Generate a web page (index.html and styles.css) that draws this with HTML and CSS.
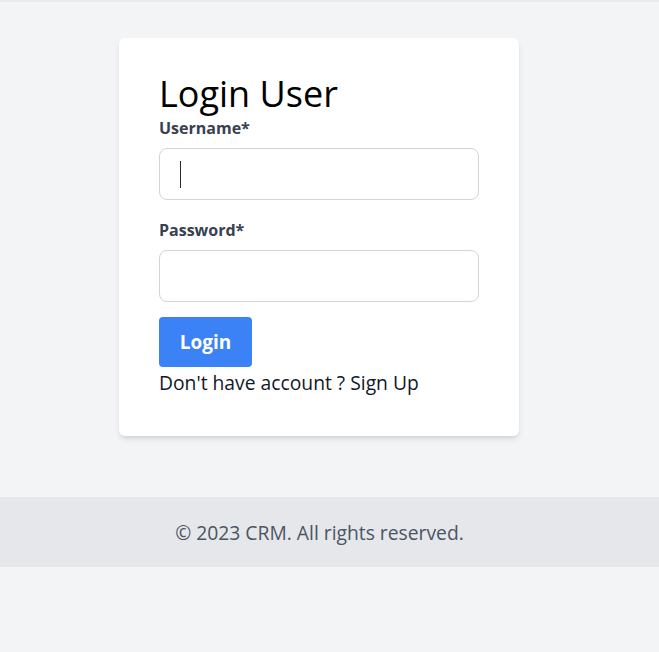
FILE: index.html
```html
<!DOCTYPE html>
<html lang="en">
<head>
<meta charset="utf-8">
<title>Login User</title>
<link rel="stylesheet" href="styles.css">
</head>
<body>
<div class="topbar"></div>
<main class="main">
  <div class="card">
    <h1 class="title">Login User</h1>
    <form class="form">
      <label class="label" for="username">Username*</label>
      <div class="field">
        <input class="input" id="username" type="text">
        <span class="caret"></span>
      </div>
      <label class="label" for="password">Password*</label>
      <div class="field field-last">
        <input class="input" id="password" type="password">
      </div>
      <button class="btn" type="button">Login</button>
      <p class="signup">Don't have account ? <a class="link" href="#">Sign Up</a></p>
    </form>
  </div>
</main>
<footer class="footer">© 2023 CRM. All rights reserved.</footer>
</body>
</html>
```

FILE: styles.css
```css
* { box-sizing: border-box; }
html, body { margin: 0; padding: 0; }
body {
  background: #f3f4f6;
  font-family: "Open Sans", "Noto Sans", sans-serif;
  color: #1f2937;
  min-height: 652px;
}
.topbar { height: 2px; background: #e9eaec; }
.main { padding: 36px 0 61px 119px; }
.card {
  width: 400px;
  background: #fff;
  border-radius: 6px;
  box-shadow: 0 4px 6px -1px rgba(0,0,0,0.1), 0 2px 4px -2px rgba(0,0,0,0.1);
  padding: 33px 40px 40px;
}
.title {
  margin: 0;
  font-size: 36px;
  font-weight: 400;
  line-height: 45px;
  color: #000;
}
.form { display: flex; flex-direction: column; align-items: flex-start; }
.label {
  font-size: 16px;
  font-weight: 700;
  line-height: 24px;
  color: #374151;
  margin-bottom: 8px;
}
.field { position: relative; margin-bottom: 18px; }
.field-last { margin-bottom: 15px; }
.input {
  display: block;
  width: 320px;
  height: 52px;
  border: 1px solid #d1d5db;
  border-radius: 8px;
  padding: 0 20px;
  font-size: 18px;
  font-family: inherit;
  outline: none;
  background: #fff;
}
.caret {
  position: absolute;
  left: 21px;
  top: 13px;
  width: 1px;
  height: 27px;
  background: #1f2937;
}
.btn {
  height: 50px;
  width: 93px;
  background: #3b82f6;
  color: #fff;
  border: none;
  border-radius: 4px;
  font-family: inherit;
  font-size: 19px;
  font-weight: 700;
  padding: 0;
}
.signup {
  margin: 3px 0 0;
  font-size: 19.3px;
  line-height: 26px;
  color: #111827;
}
.link { color: inherit; text-decoration: none; }
.footer {
  height: 70px;
  background: #e5e7eb;
  display: flex;
  align-items: center;
  justify-content: center;
  padding-right: 20px;
  font-size: 19.3px;
  color: #4b5563;
}
```
